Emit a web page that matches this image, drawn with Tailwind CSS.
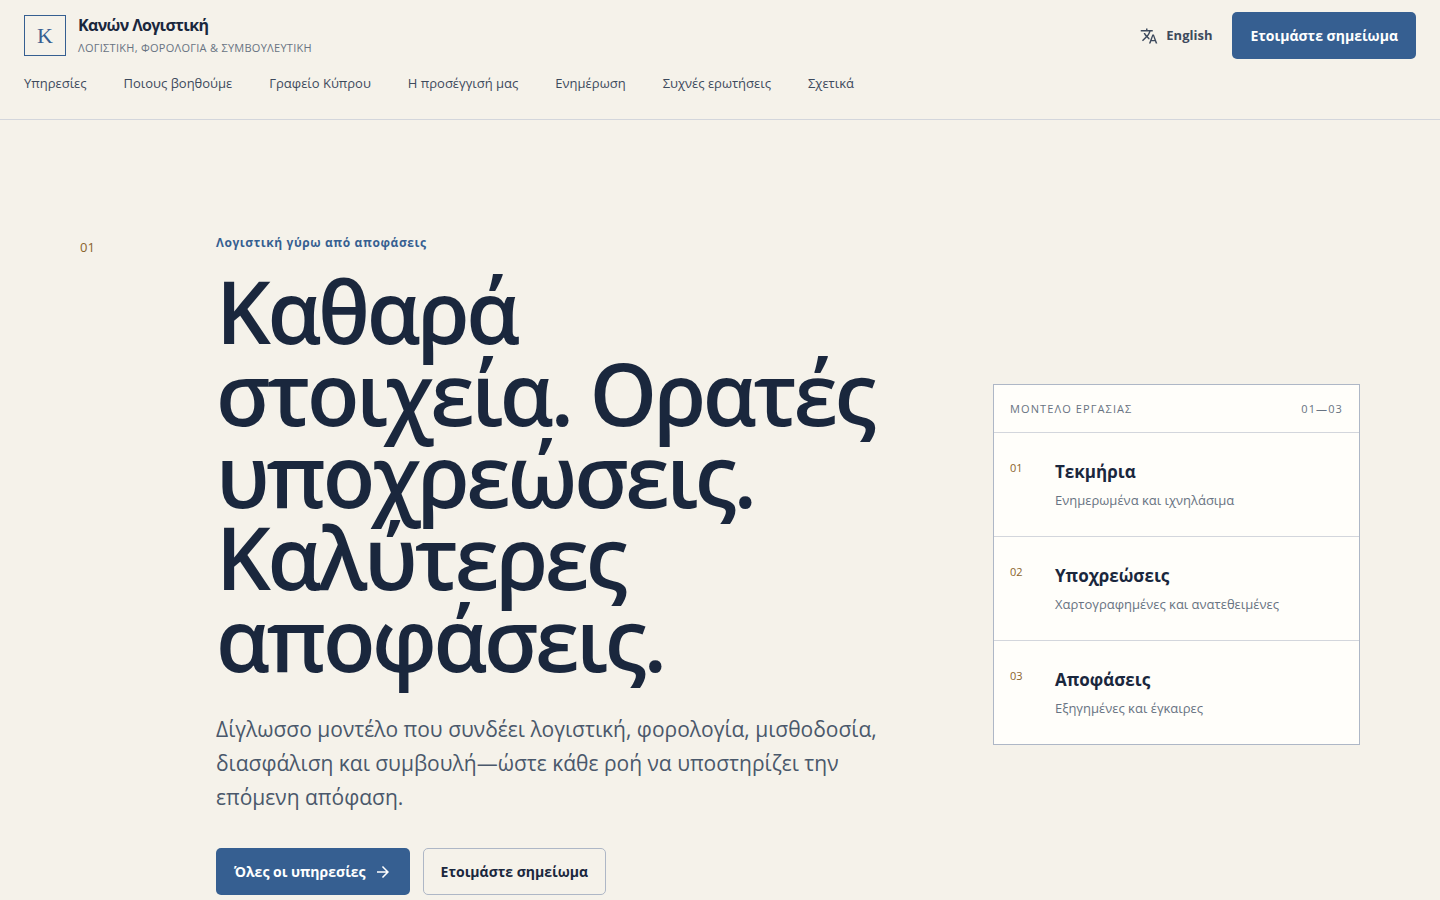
<!DOCTYPE html>
<html lang="el">
<head>
    <meta charset="UTF-8">
    <meta name="viewport" content="width=device-width, initial-scale=1.0">
    <title>Κανών Λογιστική</title>
    <script src="https://cdn.jsdelivr.net/npm/@tailwindcss/browser@4"></script>
</head>
<body class="bg-[#f5f2ea] text-[#1a273d] font-['Open_Sans',sans-serif]">
    <header class="border-b border-[#d3d6dc] px-6 pt-3 pb-6">
        <div class="flex items-center justify-between">
            <a href="#" class="flex items-center gap-3">
                <span class="flex h-[41px] w-[42px] items-center justify-center border border-[#365f91] font-['Liberation_Serif',serif] text-[22px] text-[#365f91]">K</span>
                <span class="flex flex-col pt-px">
                    <span class="text-base leading-6 font-bold tracking-[-0.04em]">Κανών Λογιστική</span>
                    <span class="text-[11px] leading-[22px] tracking-wide text-[#687382]">ΛΟΓΙΣΤΙΚΗ, ΦΟΡΟΛΟΓΙΑ &amp; ΣΥΜΒΟΥΛΕΥΤΙΚΗ</span>
                </span>
            </a>
            <div class="flex items-center gap-5">
                <a href="#" class="flex items-center gap-2 text-[13px] font-bold text-[#3d4a5d]">
                    <svg class="h-[18px] w-[18px]" viewBox="0 0 24 24" fill="currentColor" aria-hidden="true">
                        <path d="m11.9 22 4.55-12h2.1l4.55 12H21l-1.075-3.05h-4.85L14 22zM4 19l-1.4-1.4 5.05-5.05q-.875-.875-1.587-2T4.75 8h2.1q.5.975 1 1.7t1.2 1.45q.825-.825 1.713-2.313T12.1 6H1V4h7V2h2v2h7v2h-2.9q-.525 1.8-1.575 3.7t-2.075 2.9l2.4 2.45-.75 2.05-3.05-3.125zm11.7-1.8h3.6l-1.8-5.1z"/>
                    </svg>
                    English
                </a>
                <a href="#" class="flex h-[47px] items-center rounded-[5px] bg-[#365f91] px-[18px] text-sm font-bold text-white">Ετοιμάστε σημείωμα</a>
            </div>
        </div>
        <nav class="mt-[13px] mb-px flex flex-wrap gap-x-[37px] text-[13px] leading-[22px] text-[#3d4a5d]">
            <a href="#">Υπηρεσίες</a>
            <a href="#">Ποιους βοηθούμε</a>
            <a href="#">Γραφείο Κύπρου</a>
            <a href="#">Η προσέγγισή μας</a>
            <a href="#">Ενημέρωση</a>
            <a href="#">Συχνές ερωτήσεις</a>
            <a href="#">Σχετικά</a>
        </nav>
    </header>

    <main>
        <section class="mx-auto grid max-w-[1440px] grid-cols-[88px_1fr_367px] items-center gap-x-12 px-20 pt-28 pb-28">
            <span class="self-start pt-1 text-[13px] leading-[22px] text-[#8a642c]">01</span>

            <div class="pb-0.5">
                <p class="text-xs leading-[22px] font-bold tracking-wider text-[#365f91]">Λογιστική γύρω από αποφάσεις</p>
                <h1 class="mt-4 max-w-[668px] text-[86px] leading-[82px] font-semibold tracking-[-0.04em]">Καθαρά στοιχεία. Ορατές υποχρεώσεις. Καλύτερες αποφάσεις.</h1>
                <p class="mt-8 max-w-[680px] text-[21px] leading-[34px] text-[#4a586b]">Δίγλωσσο μοντέλο που συνδέει λογιστική, φορολογία, μισθοδοσία, διασφάλιση και συμβουλή—ώστε κάθε ροή να υποστηρίζει την επόμενη απόφαση.</p>
                <div class="mt-[34px] flex flex-wrap gap-[13px]">
                    <a href="#" class="flex h-[47px] items-center gap-2 rounded-[5px] bg-[#365f91] px-[18px] text-sm font-bold text-white">
                        Όλες οι υπηρεσίες
                        <svg class="h-[18px] w-[18px]" viewBox="0 0 24 24" fill="currentColor" aria-hidden="true">
                            <path d="M16.175 13H4v-2h12.175l-5.6-5.6L12 4l8 8-8 8-1.425-1.4z"/>
                        </svg>
                    </a>
                    <a href="#" class="flex h-[47px] items-center rounded-[5px] border border-[#aeb7c6] px-[17px] text-sm font-bold">Ετοιμάστε σημείωμα</a>
                </div>
            </div>

            <aside class="border border-[#aeb7c6] bg-[#fffefa]">
                <div class="flex items-center justify-between border-b border-[#d3d6dc] px-4 pt-[15px] pb-[14px] text-[11px] leading-[18px] tracking-widest text-[#687382]">
                    <span>ΜΟΝΤΕΛΟ ΕΡΓΑΣΙΑΣ</span>
                    <span>01—03</span>
                </div>
                <ol class="divide-y divide-[#d3d6dc]">
                    <li class="grid grid-cols-[29px_1fr] gap-4 px-4 pt-6 pb-[22px]">
                        <span class="text-[11px] leading-[21px] text-[#8a642c]">01</span>
                        <div>
                            <h2 class="text-[17px] leading-[30px] font-bold">Τεκμήρια</h2>
                            <p class="text-[13px] leading-[27px] text-[#687382]">Ενημερωμένα και ιχνηλάσιμα</p>
                        </div>
                    </li>
                    <li class="grid grid-cols-[29px_1fr] gap-4 px-4 pt-6 pb-[22px]">
                        <span class="text-[11px] leading-[21px] text-[#8a642c]">02</span>
                        <div>
                            <h2 class="text-[17px] leading-[30px] font-bold">Υποχρεώσεις</h2>
                            <p class="text-[13px] leading-[27px] text-[#687382]">Χαρτογραφημένες και ανατεθειμένες</p>
                        </div>
                    </li>
                    <li class="grid grid-cols-[29px_1fr] gap-4 px-4 pt-6 pb-[22px]">
                        <span class="text-[11px] leading-[21px] text-[#8a642c]">03</span>
                        <div>
                            <h2 class="text-[17px] leading-[30px] font-bold">Αποφάσεις</h2>
                            <p class="text-[13px] leading-[27px] text-[#687382]">Εξηγημένες και έγκαιρες</p>
                        </div>
                    </li>
                </ol>
            </aside>
        </section>
    </main>
</body>
</html>
